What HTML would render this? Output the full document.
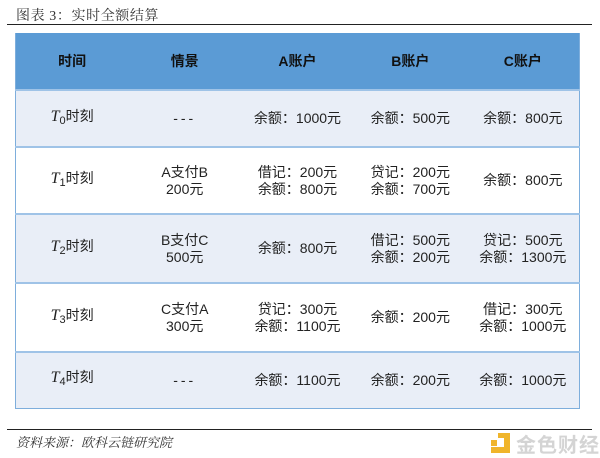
<!DOCTYPE html>
<html><head><meta charset="utf-8"><style>
body{margin:0;width:600px;height:458px;background:#fff;position:relative;overflow:hidden;font-family:"Liberation Sans","Noto Sans CJK SC",sans-serif;color:#222}
.title{position:absolute;left:16px;top:5px;font-size:14px;font-family:"Liberation Serif","Noto Serif CJK SC",serif;color:#333;letter-spacing:0.6px}
.hr{position:absolute;left:7px;width:585px;height:1px;background:#222}
table{position:absolute;left:15px;top:33px;width:565px;border-collapse:collapse;font-size:14px;table-layout:fixed}
td{text-align:center;line-height:17px;padding:0;border-top:2px solid #9fc3e7}
table{border-left:1px solid #7eaedc;border-right:1px solid #7eaedc;border-bottom:1px solid #7eaedc}
tr.h td{background:#5b9bd5;font-weight:bold;color:#111;height:56px;border-top:none}
tr.l td{background:#e9eef7}
tr.w td{background:#fff}
i{font-family:"Liberation Serif",serif;font-size:16px}
sub{font-size:11px;vertical-align:-3px}
.d{letter-spacing:3px}
.src{position:absolute;left:16px;top:432px;font-size:13px;font-style:italic;font-family:"Liberation Serif","Noto Serif CJK SC",serif;color:#333}
.wm{position:absolute;left:490px;top:429px;display:flex;align-items:center}
</style></head><body>
<div class="title">图表 3：实时全额结算</div>
<div class="hr" style="top:24px"></div>
<table>
<tr class="h"><td>时间</td><td>情景</td><td>A账户</td><td>B账户</td><td>C账户</td></tr>
<tr class="l" style="height:57px"><td><i>T</i><sub>0</sub>时刻</td><td class="d">---</td><td>余额：1000元</td><td>余额：500元</td><td>余额：800元</td></tr>
<tr class="w" style="height:67px"><td><i>T</i><sub>1</sub>时刻</td><td>A支付B<br>200元</td><td>借记：200元<br>余额：800元</td><td>贷记：200元<br>余额：700元</td><td>余额：800元</td></tr>
<tr class="l" style="height:69px"><td><i>T</i><sub>2</sub>时刻</td><td>B支付C<br>500元</td><td>余额：800元</td><td>借记：500元<br>余额：200元</td><td>贷记：500元<br>余额：1300元</td></tr>
<tr class="w" style="height:69px"><td><i>T</i><sub>3</sub>时刻</td><td>C支付A<br>300元</td><td>贷记：300元<br>余额：1100元</td><td>余额：200元</td><td>借记：300元<br>余额：1000元</td></tr>
<tr class="l" style="height:56px"><td><i>T</i><sub>4</sub>时刻</td><td class="d">---</td><td>余额：1100元</td><td>余额：200元</td><td>余额：1000元</td></tr>
</table>
<div class="hr" style="top:429px"></div>
<div class="src">资料来源：欧科云链研究院</div>
<div class="wm"><svg width="22" height="24" viewBox="0 0 22 24"><rect x="8" y="1" width="6" height="5" fill="#f0b52b"/><rect x="14" y="1" width="6" height="20" fill="#f0b52b"/><rect x="1" y="15" width="19" height="6" fill="#f0b52b"/><rect x="1" y="8" width="6" height="6" fill="#f0b52b"/></svg><span style="font-size:20px;color:#d4d4d4;margin-left:4px;letter-spacing:1px;font-weight:bold">金色财经</span></div>
</body></html>
